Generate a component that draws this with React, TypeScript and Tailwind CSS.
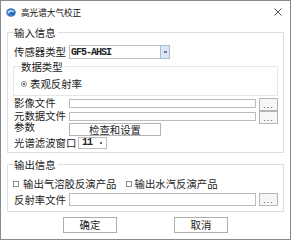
import React from "react";

const lbl = "text-[10.4px] leading-[10px] whitespace-nowrap";

function FileRow({ label, tall }: { label: string; tall?: boolean }) {
  return (
    <div className="flex items-start h-[13px]">
      <div className={`w-[55px] ${lbl} ${tall ? "mt-[2px]" : "mt-[0px]"}`}>{label}</div>
      <div
        className={`w-[187px] ${tall ? "h-[13px]" : "h-[9px] mt-[1px]"} border border-[#bcbcbc] bg-white`}
      />
      <div className="ml-[3px] w-[19px] h-[13px] border border-[#b5b5b5] bg-[#f6f6f6] flex items-center justify-center text-[9px] leading-[9px] text-[#444] font-[family-name:'Liberation_Sans',sans-serif] tracking-[1px] pt-[2px]">
        ...
      </div>
    </div>
  );
}

export default function App() {
  return (
    <div className="w-[291px] h-[240px] border border-[#8a8a8a] bg-white flex flex-col text-[#222] font-[family-name:'Noto_Sans_CJK_SC','Noto_Sans',sans-serif]">
      {/* title bar */}
      <div className="h-[22px] flex items-center pl-[5px] pr-[8px] shrink-0">
        <svg width="10" height="9" viewBox="0 0 10 9">
          <ellipse cx="5" cy="4.5" rx="4.8" ry="4.2" fill="#3a78c4" />
          <path d="M2 5.2 C3 2.6 6 2.4 7.6 3.8" stroke="#dceaf8" strokeWidth="1.3" fill="none" />
          <circle cx="6.6" cy="5.6" r="1" fill="#1f4f8f" />
        </svg>
        <span className="ml-[5px] text-[8.6px] leading-[10px] text-[#111]">高光谱大气校正</span>
        <svg className="ml-auto" width="8" height="8" viewBox="0 0 8 8">
          <path d="M0.5 0.5 L7.5 7.5 M7.5 0.5 L0.5 7.5" stroke="#444" strokeWidth="0.9" />
        </svg>
      </div>

      <div className="flex flex-col px-[6px] pt-[3px]">
        {/* 输入信息 */}
        <fieldset className="border border-[#dedede] pl-[6px] pr-[5px] pb-[3px] min-w-0">
          <legend className="text-[10.4px] leading-[13px] px-0 pr-[2px]">输入信息</legend>

          <div className="flex items-center mt-[6px] h-[14px]">
            <div className={`w-[55px] ${lbl}`}>传感器类型</div>
            <div className="flex h-[14px]">
              <div className="w-[92px] h-full border border-[#bdbdbd] bg-white flex items-center pl-[1px] font-[family-name:'Liberation_Mono',monospace] font-bold text-[10px] tracking-[-1px] text-[#222]">
                GF5-AHSI
              </div>
              <div className="-ml-px w-[10px] h-full border border-[#a9bcd8] bg-[#dbe5f4] flex items-center justify-center">
                <div className="w-[3px] h-[2px] bg-[#6f7f96]" />
              </div>
            </div>
          </div>

          {/* 数据类型 */}
          <fieldset className="-ml-[1px] mt-[1px] border border-[#e6e6e6] pl-[7px] pb-[5px] min-w-0">
            <legend className="text-[10.4px] leading-[13px] px-0 pr-[2px]">数据类型</legend>
            <div className="flex items-center h-[13px] mt-[4px]">
              <div className="w-[6px] h-[6px] rounded-full border border-[#8c8c8c] flex items-center justify-center">
                <div className="w-[2px] h-[2px] rounded-full bg-[#444]" />
              </div>
              <span className={`ml-[3px] ${lbl}`}>表观反射率</span>
            </div>
          </fieldset>

          <div className="mt-[2px] flex flex-col">
            <FileRow label="影像文件" />
            <FileRow label="元数据文件" />
            <div className="flex items-start h-[13px] -mt-[1px]">
              <div className={`w-[55px] ${lbl} -mt-[1px]`}>参数</div>
              <div className="w-[92px] h-[13px] border border-[#b5b5b5] bg-white flex items-center justify-center text-[10.4px] leading-[10px] pt-[1px]">
                检查和设置
              </div>
            </div>
            <div className="flex items-center h-[12px] mt-[1px]">
              <div className={`w-[64px] ${lbl}`}>光谱滤波窗口</div>
              <div className="w-[29px] h-[12px] border border-[#bdbdbd] bg-white flex items-center pl-[3px] pr-[4px]">
                <span className="font-[family-name:'Liberation_Mono',monospace] font-bold text-[10px] tracking-[-1px] leading-[10px]">11</span>
                <div className="ml-auto w-[2px] h-[2px] bg-[#666]" />
              </div>
            </div>
          </div>
        </fieldset>

        {/* 输出信息 */}
        <fieldset className="mt-[5px] border border-[#dedede] pl-[6px] pr-[5px] pb-[5px] min-w-0">
          <legend className="text-[10.4px] leading-[13px] px-0 pr-[2px]">输出信息</legend>
          <div className="flex items-center h-[13px] mt-[6px]">
            <div className="-ml-[1px] w-[6px] h-[6px] border border-[#8c8c8c] bg-white" />
            <span className={`ml-[4px] ${lbl}`}>输出气溶胶反演产品</span>
            <div className="ml-[9px] w-[6px] h-[6px] border border-[#8c8c8c] bg-white" />
            <span className={`ml-[3px] ${lbl}`}>输出水汽反演产品</span>
          </div>
          <div className="mt-[3px]">
            <FileRow label="反射率文件" tall />
          </div>
        </fieldset>

        <div className="mt-[5px] flex justify-center gap-[57px]">
          <div className="w-[54px] h-[16px] border border-[#adadad] bg-white flex items-center justify-center text-[10.4px] leading-[10px]">
            确定
          </div>
          <div className="w-[54px] h-[16px] border border-[#adadad] bg-white flex items-center justify-center text-[10.4px] leading-[10px]">
            取消
          </div>
        </div>
      </div>
    </div>
  );
}
